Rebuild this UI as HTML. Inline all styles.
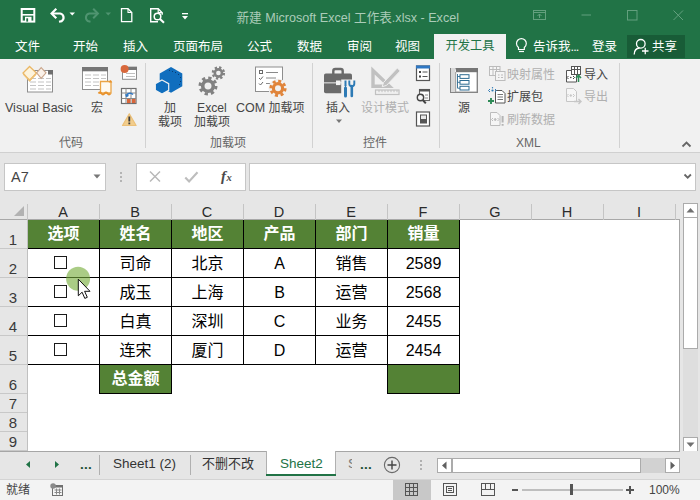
<!DOCTYPE html>
<html lang="zh-CN">
<head>
<meta charset="utf-8">
<title>新建 Microsoft Excel 工作表.xlsx - Excel</title>
<style>
*{box-sizing:border-box;margin:0;padding:0}
html,body{width:700px;height:500px;overflow:hidden;background:#e6e6e6}
body{font-family:"Liberation Sans","Noto Sans CJK SC",sans-serif;font-size:12px;color:#262626;position:relative}
.abs{position:absolute}
#app{position:absolute;left:0;top:0;width:700px;height:500px;overflow:hidden;background:#e6e6e6}
/* header */
#hdr{left:0;top:0;width:700px;height:59px;background:#217346}
#title{left:236.500px;top:8.500px;color:#abccb9;font-size:12.600px;white-space:nowrap;line-height:18px}
.tab{position:absolute;top:34.500px;height:25px;line-height:25px;color:#fff;font-size:12.500px;white-space:nowrap}
#tabact{left:434px;top:34px;width:72px;height:25px;background:#f1f1f1;color:#217346;text-align:center;line-height:24px;font-size:12.300px}
#share{left:627px;top:35px;width:58px;height:23px;background:#185c37}
/* ribbon */
#rib{left:0;top:59px;width:700px;height:94px;background:#f1f1f1;border-bottom:1px solid #d0d0d0}
.rl{position:absolute;font-size:12px;color:#454545;white-space:nowrap;line-height:16px}
.rl.dis{color:#b0b0b0}
.grp{position:absolute;top:135px;font-size:12px;color:#666;white-space:nowrap;line-height:16px;text-align:center}
.sep{position:absolute;top:63px;width:1px;height:85px;background:#d2d2d2}
/* formula */
#fbar{left:0;top:153px;width:700px;height:47px;background:#e6e6e6}
#nbox{left:4px;top:163px;width:102px;height:28px;background:#fff;border:1px solid #c6c6c6}
#fxbox{left:136px;top:163px;width:110px;height:28px;background:#fff;border:1px solid #c6c6c6}
#fbox{left:249px;top:163px;width:447px;height:28px;background:#fff;border:1px solid #c6c6c6}
/* grid */
#grid{left:0;top:200px;width:680px;height:251px;background:#fff}
#colh{left:0;top:200px;width:680px;height:20px;background:#e6e6e6;border-bottom:1px solid #a8a8a8}
#rowh{z-index:2;left:0;top:220px;width:28px;height:231px;background:#e6e6e6;border-right:1px solid #c0c0c0}
.ch{position:absolute;top:203px;height:18px;line-height:18px;font-size:14.5px;color:#2b2b2b;text-align:center;width:72px}
.cs{position:absolute;top:204px;width:1px;height:16px;background:#c4c4c4}
.rh{z-index:3;position:absolute;left:0;width:26px;text-align:center;font-size:15px;color:#3a3a3a;line-height:16px}
.rs{z-index:3;position:absolute;left:0;width:27px;height:1px;background:#c8c8c8}
.hc{position:absolute;top:220px;width:73px;height:29px;background:#548235;color:#fff;font-weight:bold;font-size:16px;text-align:center;line-height:27px;border:1px solid #000;border-top:0}
.hc.tot{height:30px;border-top:1px solid #000}
.c{position:absolute;width:73px;height:30px;border:1px solid #000;font-size:16px;color:#000;text-align:center;line-height:29px}
.cb{position:absolute;width:13px;height:13px;border:1.300px solid #1a1a1a;background:#fff}
/* sheet tabs */
#tabs{left:0;top:451px;width:700px;height:28px;background:#e6e6e6}
.st{position:absolute;top:454px;font-size:13.5px;color:#333;line-height:20px;white-space:nowrap}
.sb{background:#fff;border:1px solid #ababab}
#status{left:0;top:479px;width:700px;height:21px;background:#f3f3f3;border-top:1px solid #d4d4d4}
</style>
</head>
<body>
<div id="app">
<!-- HEADER -->
<div id="hdr" class="abs"></div>
<div id="title" class="abs">新建 Microsoft Excel 工作表.xlsx - Excel</div>
<div id="share" class="abs"></div>
<div id="tabact" class="abs">开发工具</div>
<div class="tab" style="left:15px">文件</div>
<div class="tab" style="left:73px">开始</div>
<div class="tab" style="left:123px">插入</div>
<div class="tab" style="left:173px">页面布局</div>
<div class="tab" style="left:247px">公式</div>
<div class="tab" style="left:297px">数据</div>
<div class="tab" style="left:347px">审阅</div>
<div class="tab" style="left:395px">视图</div>
<div class="tab" style="left:533px">告诉我<span style="letter-spacing:-.8px">...</span></div>
<div class="tab" style="left:592px">登录</div>
<div class="tab" style="left:652px">共享</div>
<svg class="abs" style="left:0;top:0" width="700" height="59" fill="none" stroke="#fff" stroke-width="1.500">
<!-- save -->
<rect x="21.700" y="9" width="12.600" height="12.600" stroke-width="2"/><path d="M21.700 14.800h12.600" stroke-width="1.600"/><rect x="25" y="16.800" width="6.500" height="4.800" fill="#fff" stroke="none"/><rect x="26.300" y="18.300" width="1.800" height="3.300" fill="#217346" stroke="none"/>
<!-- undo -->
<path d="M52 13.500h8.200a4.200 4.200 0 0 1 1.500 7.600l-2.700.6" stroke-width="2.200"/><path d="M56.300 8.800l-4.700 4.700 4.700 4.700" stroke-width="2.200"/>
<polygon points="69.500,12.500 75,12.500 72.250,15.500" fill="#fff" stroke="none"/>
<!-- redo -->
<g stroke="#4f9470" fill="none"><path d="M97.500 13.500h-8.200a4.200 4.200 0 0 0-1.500 7.600l2.700.6" stroke-width="2"/><path d="M93.200 8.800l4.700 4.700-4.700 4.700" stroke-width="2"/></g>
<polygon points="105.500,12.500 111,12.500 108.250,15.500" fill="#4f9470" stroke="none"/>
<!-- new -->
<path d="M121.500 8.700h6.500l3.800 3.800v9.200h-10.300z" stroke-width="1.300"/><path d="M128 8.700v3.800h3.800" stroke-width="1.100"/>
<!-- preview -->
<path d="M158 21.700h-7.300v-13h7.500l4 4v2" stroke-width="1.400"/><path d="M158.200 8.700v4h4" stroke-width="1.200"/><circle cx="157.500" cy="16.500" r="3.300" stroke-width="1.500"/><path d="M160 19l4 3.800" stroke-width="2"/>
<!-- customize -->
<rect x="182" y="13" width="6" height="1.300" fill="#fff" stroke="none"/><polygon points="182,16 188,16 185,19.500" fill="#fff" stroke="none"/>
<!-- window ctrls -->
<g stroke="#63a07e" stroke-width="1"><rect x="533.500" y="10.500" width="12" height="9"/><path d="M533.500 12.500h12M539.500 18v-4M537.500 16l2-2 2 2"/><path d="M581.500 15h9.500"/><rect x="627.500" y="10.500" width="9.500" height="9.500"/><path d="M673.500 10.500l9.500 9.500M683 10.500l-9.500 9.500"/></g>
<!-- bulb -->
<path d="M518.500 47.500c-1.500-1.300-2-2.600-2-4a4.900 4.900 0 0 1 9.800 0c0 1.400-.5 2.700-2 4v2h-5.800z" stroke-width="1.200"/><path d="M519 51.500h5" stroke-width="1.200"/>
<!-- person -->
<circle cx="640.800" cy="43.800" r="4.300" stroke-width="1.300"/><path d="M634.200 54.500c0-4 2.500-6.300 5.500-6.500" stroke-width="1.300"/><path d="M642 51h6.500M645.250 47.800v6.500" stroke-width="1.300"/>
</svg>
<!-- RIBBON -->
<!--RIB-START-->
<div id="rib" class="abs"></div>
<div class="sep" style="left:145px"></div>
<div class="sep" style="left:312px"></div>
<div class="sep" style="left:439px"></div>
<div class="sep" style="left:619px"></div>
<svg class="abs" style="left:0;top:0" width="700" height="154" fill="none">
<!-- Visual Basic -->
<g>
<rect x="27.500" y="70.500" width="25" height="21.500" fill="#fff" stroke="#8e8e8e"/>
<rect x="48" y="70" width="5" height="4.500" fill="#6e6e6e"/>
<g stroke="#c4c4c4" stroke-width="1.200"><path d="M30 78.500h6M38 78.500h6M46 78.500h5M30 82h6M38 82h6M46 82h5M30 85.500h6M38 85.500h6M46 85.500h5M30 89h6M38 89h6M46 89h5"/></g>
<polygon points="29.600,66.500 36.400,73 29.600,80.800 23,73" fill="#fdf3dc" stroke="#eab765" stroke-width="1.300"/>
<polygon points="23,73 29.600,79 36.400,73 36.400,74.800 29.600,81.500 23,74.800" fill="#eebf73"/>
<polygon points="41.200,67.600 46,72.800 41.200,78.400 36.600,72.800" fill="#fbf2ea" stroke="#c9a58b" stroke-width="1.100"/>
</g>
<!-- Macro -->
<g>
<rect x="82.500" y="67.500" width="25" height="22" fill="#fff" stroke="#8e8e8e"/>
<rect x="82" y="67" width="26" height="4.300" fill="#767676"/>
<g stroke="#c4c4c4" stroke-width="1.200"><path d="M85 75h6M93 75h6M101 75h5M85 78.500h6M93 78.500h6M101 78.500h5M85 82h6M93 82h6M85 85.500h6M93 85.500h6"/></g>
<path d="M100.500 81.500h10.500v11.500h-10.500z" fill="#fefaf2" stroke="#eba546" stroke-width="1.300"/>
<path d="M98.500 93.500q1.500-2 3 0t3 0 3 0 3 0" stroke="#e8912a" stroke-width="1.800"/>
<path d="M110.500 80l1.800 2.500h-3.600z" fill="#e8912a"/>
</g>
<!-- record macro -->
<g>
<rect x="122.500" y="67.300" width="14" height="12" fill="#fff" stroke="#8e8e8e"/>
<rect x="122" y="66.800" width="15" height="3.200" fill="#767676"/>
<path d="M126 73.500h9M126 76.500h9" stroke="#c0c0c0"/>
<circle cx="124.600" cy="68.900" r="4" fill="#d8683c"/>
</g>
<!-- relative refs -->
<g>
<rect x="121.500" y="88.500" width="14.500" height="15" fill="#fff" stroke="#6e6e6e" stroke-width="1.200"/>
<path d="M126 88.500v15M131 88.500v15M121.500 93h14.500M121.500 98.500h14.500" stroke="#8a8a8a"/>
<rect x="127" y="99" width="3.500" height="4" fill="#d9663a"/><rect x="132" y="99" width="3.500" height="4" fill="#d9663a"/>
<path d="M126.500 96.500c0-3 4-4.500 6.500-2" stroke="#2f78c4" stroke-width="1.600"/><path d="M125 94l1.300 3.300 3-1.500z" fill="#2f78c4"/>
</g>
<!-- warning -->
<g>
<path d="M129.300 113.800l6.800 11.700h-13.600z" fill="#f2cd8c" stroke="#ecc078" stroke-width="1.200" stroke-linejoin="round"/>
<rect x="128.400" y="116.500" width="1.800" height="5" fill="#3a3a3a"/><rect x="128.400" y="122.500" width="1.800" height="1.800" fill="#3a3a3a"/>
</g>
<!-- Add-ins hexagons -->
<g fill="#106ebe">
<polygon points="171,67 182.300,73.400 182.300,86.300 171,92.700 159.700,86.300 159.700,73.400"/>
<polygon points="162,80 168.700,83.700 168.700,90.300 162,94 155.300,90.300 155.300,83.700" stroke="#f1f1f1" stroke-width="1.200"/>
</g>
<g fill="#0a3d73"><rect x="169" y="70" width="1" height="1"/><rect x="172" y="71" width="1" height="1"/><rect x="175" y="72" width="1" height="1"/><rect x="178" y="74" width="1" height="1"/><rect x="180" y="77" width="1" height="1"/><rect x="180" y="81" width="1" height="1"/><rect x="179" y="84" width="1" height="1"/></g>
<!-- Excel add-ins gears -->
<g stroke="#828282">
<circle cx="208" cy="86" r="5.300" stroke-width="3.600"/>
<circle cx="208" cy="86" r="8" stroke-width="3" stroke-dasharray="3.300 2.980"/>
<circle cx="218.400" cy="73" r="3.600" stroke-width="2.600"/>
<circle cx="218.400" cy="73" r="5.600" stroke-width="2.200" stroke-dasharray="2.300 2.100"/>
</g>
<!-- COM add-ins -->
<g>
<rect x="255.500" y="67" width="27" height="24.500" fill="#fff" stroke="#8e8e8e"/>
<path d="M266 72.500h12M266 78h10M266 83.500h6" stroke="#8a8a8a"/>
<rect x="259.500" y="70.500" width="3" height="3" stroke="#6a6a6a"/>
<path d="M259 78l1.500 1.500 2.500-3M259 83.500l1.500 1.500 2.500-3" stroke="#6a6a6a"/>
<circle cx="278" cy="88.300" r="9.500" fill="#f1f1f1" stroke="none"/>
<circle cx="278" cy="88.300" r="4.600" stroke="#e0843a" stroke-width="3.200"/>
<circle cx="278" cy="88.300" r="7.200" stroke="#e0843a" stroke-width="2.800" stroke-dasharray="3 2.650"/>
</g>
<!-- Insert toolbox -->
<g>
<path d="M333.300 74v-3a2 2 0 0 1 2-2h5.400a2 2 0 0 1 2 2v3" stroke="#6b6b6b" stroke-width="2.400"/>
<rect x="324" y="73.500" width="28" height="19.800" rx="1.800" fill="#6b6b6b"/>
<rect x="324" y="82.300" width="28" height="1.100" fill="#e4e4e4"/>
<rect x="336" y="80.500" width="4.600" height="4.600" fill="#f4f4f4"/>
<path d="M341.200 79.500h14v18h-14z" fill="#f1f1f1"/>
<path d="M345.500 80.500v5.500" stroke="#2d7ab5" stroke-width="2"/><path d="M345.500 85v3.500" stroke="#2d7ab5" stroke-width="1.200"/><path d="M345.500 88v8" stroke="#2d7ab5" stroke-width="3" stroke-linecap="round"/>
<path d="M351.800 86v10" stroke="#2d7ab5" stroke-width="2.600" stroke-linecap="round"/><path d="M349.300 80.500v3.300a2.500 2.500 0 0 0 5 0v-3.300" stroke="#2d7ab5" stroke-width="1.900"/>
</g>
<polygon points="336,119.500 342,119.500 339,123" fill="#777"/>
<!-- Design mode (disabled) -->
<g stroke="#c1c1c1" fill="none">
<path d="M373 70.500v15.700h16.500z" stroke-width="3.400" stroke-linejoin="miter"/>
<path d="M383.500 82.500l13.800-14.500 3 2.900-13.800 14.500-4.300 1.300z" fill="#c1c1c1" stroke="#f1f1f1" stroke-width="1"/>
<rect x="375.500" y="90" width="23.500" height="4.500" stroke-width="1.200"/>
<path d="M379 90v2.200M382 90v2.200M385 90v2.200M388 90v2.200M391 90v2.200M394 90v2.200M397 90v2.200" stroke-width="1"/>
</g>
<!-- properties -->
<g>
<rect x="416.500" y="66" width="13" height="14.500" fill="#fff" stroke="#555" stroke-width="1.200"/>
<rect x="416" y="65.500" width="14" height="3" fill="#2f78c4"/>
<rect x="419" y="71" width="2" height="2" fill="#444"/><rect x="419" y="75.500" width="2" height="2" fill="#444"/>
<path d="M422.500 72h5M422.500 76.500h5" stroke="#555"/>
</g>
<!-- view code -->
<g>
<rect x="419.500" y="89.500" width="10" height="11" fill="#fff" stroke="#666" stroke-width="1.100"/>
<rect x="419" y="89" width="11" height="2.500" fill="#555"/>
<path d="M425 95h3M425 98h3" stroke="#888"/>
<circle cx="420.500" cy="97.500" r="3.200" fill="#f6f6f6" stroke="#444" stroke-width="1.400"/><path d="M422.800 100l3 3.300" stroke="#444" stroke-width="2"/>
</g>
<!-- run dialog -->
<g>
<rect x="416.500" y="112" width="13" height="14" fill="#fff" stroke="#555" stroke-width="1.200"/>
<rect x="420.500" y="115" width="6" height="8" fill="#e8e8e8" stroke="#555"/><rect x="420.500" y="119" width="6" height="4" fill="#555"/>
</g>
<!-- Source -->
<g>
<rect x="450.700" y="68.700" width="26.600" height="23.600" fill="#fff" stroke="#858585" stroke-width="1.400"/>
<rect x="456" y="68" width="22" height="4.200" fill="#767676"/>
<rect x="451" y="68" width="4.500" height="24" fill="#d8d8d8"/>
<path d="M455.700 72v20" stroke="#9a9a9a"/>
<path d="M457.500 74v14.200M457.500 76.500h2.500M457.500 82.300h2.500M457.500 88.200h2.500" stroke="#2d6b91" stroke-width=".9"/>
<rect x="460" y="74.700" width="9" height="3.700" fill="#fff" stroke="#2d6b91"/><rect x="460" y="80.500" width="9" height="3.700" fill="#fff" stroke="#2d6b91"/><rect x="460" y="86.300" width="9" height="3.700" fill="#fff" stroke="#2d6b91"/>
</g>
<!-- map properties (disabled) -->
<g stroke="#bcbcbc">
<rect x="489.500" y="66.500" width="10.500" height="9" fill="#f6f6f6"/><path d="M489.500 69.500h10.500M493 66.500v9M496.500 66.500v9"/>
<rect x="495.500" y="71.500" width="9.500" height="9" fill="#f4f4f4"/><path d="M498 75h1.500M501 75h2M498 77.500h1.500M501 77.500h2"/>
</g>
<!-- expansion packs -->
<g>
<path d="M495.500 90.500h6.500l3 3v9.500h-9.500z" fill="#fff" stroke="#555"/>
<path d="M497.500 94.500h5.500M497.500 97h5.500M497.500 99.500h5.500" stroke="#777"/>
<path d="M490 89l-1.500 1.500 1.500 1.500M495 89l1.500 1.500-1.500 1.500" stroke="#2d7ab5" stroke-width="1"/><circle cx="492.500" cy="90.500" r="1.100" fill="#2d7ab5"/><circle cx="492.500" cy="87.800" r=".7" fill="#2d7ab5"/>
<path d="M488 101h6M491 98v6" stroke="#2e8b57" stroke-width="1.900"/>
</g>
<!-- refresh data (disabled) -->
<g stroke="#bcbcbc">
<path d="M490.500 112.500h6.500l3 3v10h-9.500z" fill="#f6f6f6"/>
<path d="M493 118l-1.500 1.500 1.500 1.500M497.500 118l1.500 1.500-1.500 1.500"/><circle cx="495.200" cy="119.500" r=".9" fill="#bcbcbc"/>
<path d="M502.600 116v6.500M502.600 124v1.700" stroke-width="2" stroke="#b4b4b4"/>
</g>
<!-- import -->
<g>
<path d="M566.500 70.500h7l3 3v8.500h-10z" fill="#fff" stroke="#555"/>
<path d="M568.500 76l-1.500 1.500 1.500 1.500M573 76l1.500 1.500-1.500 1.500" stroke="#444"/><circle cx="570.800" cy="77.500" r=".8" fill="#444"/>
<rect x="571.500" y="66.500" width="9" height="8" fill="#fff" stroke="#555"/><path d="M571.500 69.500h9M574.500 66.500v8M577.500 66.500v8" stroke="#555"/>
<path d="M578.500 82v-6M576 78l2.500-2.800 2.500 2.800" stroke="#2e8b57" stroke-width="1.500"/>
</g>
<!-- export (disabled) -->
<g stroke="#c6c6c6">
<path d="M566.500 88.500h7l3 3v10h-10z" fill="#f6f6f6"/>
<path d="M568.500 94l-1.500 1.500 1.500 1.500M573 94l1.500 1.500-1.500 1.500"/><circle cx="570.800" cy="95.500" r=".8" fill="#c6c6c6"/>
<path d="M574 101.500h7M578.500 99l2.500 2.500-2.500 2.500" stroke-width="1.400"/>
</g>
<!-- collapse chevron -->
<path d="M682.500 146.500l4-4 4 4" stroke="#666" stroke-width="1.800"/>
</svg>
<div class="rl" style="left:5px;top:99.500px;font-size:12.500px">Visual Basic</div>
<div class="rl" style="left:91px;top:99.500px">宏</div>
<div class="rl" style="left:164px;top:99.500px">加</div>
<div class="rl" style="left:158px;top:114px">载项</div>
<div class="rl" style="left:197px;top:99.500px;font-size:12.200px">Excel</div>
<div class="rl" style="left:194px;top:114px">加载项</div>
<div class="rl" style="left:236px;top:99.500px"><span style="font-size:12.500px">COM</span> 加载项</div>
<div class="rl" style="left:326px;top:99.500px">插入</div>
<div class="rl dis" style="left:361px;top:99.500px">设计模式</div>
<div class="rl" style="left:458px;top:99.500px">源</div>
<div class="rl dis" style="left:507px;top:66.800px">映射属性</div>
<div class="rl" style="left:507px;top:89.300px">扩展包</div>
<div class="rl dis" style="left:507px;top:111.800px">刷新数据</div>
<div class="rl" style="left:584px;top:66.800px">导入</div>
<div class="rl dis" style="left:584px;top:89.300px">导出</div>
<div class="grp" style="left:59px">代码</div>
<div class="grp" style="left:210px">加载项</div>
<div class="grp" style="left:363px">控件</div>
<div class="grp" style="left:516px">XML</div>
<!--RIB-END-->
<!-- FORMULA BAR -->
<div id="fbar" class="abs"></div>
<div id="nbox" class="abs"></div>
<div id="fxbox" class="abs"></div>
<div id="fbox" class="abs"></div>
<div class="abs" style="left:11px;top:168px;font-size:14.5px;line-height:18px;color:#444">A7</div>
<svg class="abs" style="left:0;top:154px" width="700" height="46">
<polygon points="93.500,20.500 100.500,20.500 97,24.500" fill="#777"/>
<rect x="120" y="18" width="2" height="2" fill="#b4b4b4"/><rect x="120" y="22" width="2" height="2" fill="#b4b4b4"/><rect x="120" y="26" width="2" height="2" fill="#b4b4b4"/>
<path d="M150 17.500l10 10M160 17.500l-10 10" stroke="#b8b8b8" stroke-width="1.5" fill="none"/>
<path d="M185.300 23.500l3.800 4 8.400-9.200" stroke="#bdbdbd" stroke-width="2.100" fill="none"/>
<path d="M684.500 20.500l3.200 3.200 3.200-3.200" stroke="#666" stroke-width="1.800" fill="none"/>
<text x="221" y="27" font-family="'Liberation Serif','DejaVu Serif',serif" font-style="italic" font-weight="bold" font-size="15" fill="#4a4a4a">f<tspan font-size="10.500" dx=".5" dy="0">x</tspan></text>
</svg>
<!-- GRID -->
<!--GRID-START-->
<div id="grid" class="abs"></div>
<div id="colh" class="abs"></div>
<div id="rowh" class="abs"></div>
<div class="ch" style="left:27px">A</div>
<div class="cs" style="left:99px"></div>
<div class="ch" style="left:99px">B</div>
<div class="cs" style="left:171px"></div>
<div class="ch" style="left:171px">C</div>
<div class="cs" style="left:243px"></div>
<div class="ch" style="left:243px">D</div>
<div class="cs" style="left:315px"></div>
<div class="ch" style="left:315px">E</div>
<div class="cs" style="left:387px"></div>
<div class="ch" style="left:387px">F</div>
<div class="cs" style="left:459px"></div>
<div class="ch" style="left:459px">G</div>
<div class="cs" style="left:531px"></div>
<div class="ch" style="left:531px">H</div>
<div class="cs" style="left:603px"></div>
<div class="ch" style="left:603px">I</div>
<div class="cs" style="left:675px"></div>
<div class="cs" style="left:27px"></div>
<div class="rh" style="top:232px">1</div>
<div class="rs" style="top:248px"></div>
<div class="rh" style="top:261px">2</div>
<div class="rs" style="top:277px"></div>
<div class="rh" style="top:290px">3</div>
<div class="rs" style="top:306px"></div>
<div class="rh" style="top:319px">4</div>
<div class="rs" style="top:335px"></div>
<div class="rh" style="top:348px">5</div>
<div class="rs" style="top:364px"></div>
<div class="rh" style="top:377px">6</div>
<div class="rs" style="top:393px"></div>
<div class="rh" style="top:396px">7</div>
<div class="rs" style="top:412px"></div>
<div class="rh" style="top:415px">8</div>
<div class="rs" style="top:431px"></div>
<div class="rh" style="top:434px">9</div>
<div class="rs" style="top:450px"></div>
<div class="hc" style="left:27px">选项</div>
<div class="hc" style="left:99px">姓名</div>
<div class="hc" style="left:171px">地区</div>
<div class="hc" style="left:243px">产品</div>
<div class="hc" style="left:315px">部门</div>
<div class="hc" style="left:387px">销量</div>
<div class="c" style="left:27px;top:248px"></div>
<div class="c" style="left:99px;top:248px">司命</div>
<div class="c" style="left:171px;top:248px">北京</div>
<div class="c" style="left:243px;top:248px">A</div>
<div class="c" style="left:315px;top:248px">销售</div>
<div class="c" style="left:387px;top:248px">2589</div>
<div class="cb" style="left:54px;top:256px"></div>
<div class="c" style="left:27px;top:277px"></div>
<div class="c" style="left:99px;top:277px">成玉</div>
<div class="c" style="left:171px;top:277px">上海</div>
<div class="c" style="left:243px;top:277px">B</div>
<div class="c" style="left:315px;top:277px">运营</div>
<div class="c" style="left:387px;top:277px">2568</div>
<div class="cb" style="left:54px;top:285px"></div>
<div class="c" style="left:27px;top:306px"></div>
<div class="c" style="left:99px;top:306px">白真</div>
<div class="c" style="left:171px;top:306px">深圳</div>
<div class="c" style="left:243px;top:306px">C</div>
<div class="c" style="left:315px;top:306px">业务</div>
<div class="c" style="left:387px;top:306px">2455</div>
<div class="cb" style="left:54px;top:314px"></div>
<div class="c" style="left:27px;top:335px"></div>
<div class="c" style="left:99px;top:335px">连宋</div>
<div class="c" style="left:171px;top:335px">厦门</div>
<div class="c" style="left:243px;top:335px">D</div>
<div class="c" style="left:315px;top:335px">运营</div>
<div class="c" style="left:387px;top:335px">2454</div>
<div class="cb" style="left:54px;top:343px"></div>
<div class="hc tot" style="left:99px;top:364px">总金额</div>
<div class="hc tot" style="left:387px;top:364px"></div>
<!--GRID-END-->
<!-- CURSOR -->
<svg class="abs" style="left:60px;top:260px;z-index:5" width="40" height="44">
<circle cx="18.100" cy="18.800" r="12" fill="rgba(118,172,58,0.62)"/>
<path d="M18.300 19.200v16.600l3.800-3.600 2.700 6.200 2.500-1.100-2.700-6h5.400z" fill="#fff" stroke="#111" stroke-width="1" stroke-linejoin="miter"/>
</svg>
<!-- SCROLL V -->
<svg class="abs" style="left:0;top:200px" width="28" height="20"><polygon points="24,6 24,16 14,16" fill="#b2b2b2"/></svg>
<div class="abs" style="left:679px;top:220px;width:1px;height:231px;background:#a6a6a6"></div>
<div class="abs" style="left:680px;top:200px;width:20px;height:251px;background:#e6e6e6"></div>
<div class="abs" style="left:683px;top:349px;width:15px;height:88px;background:#dedede"></div>
<div class="abs sb" style="left:683px;top:203px;width:15px;height:15px"></div>
<div class="abs sb" style="left:683px;top:217px;width:15px;height:132px"></div>
<div class="abs sb" style="left:683px;top:437px;width:15px;height:15px"></div>
<svg class="abs" style="left:683px;top:203px" width="15" height="15"><polygon points="3.5,9.5 11.5,9.5 7.5,5" fill="#707070"/></svg>
<svg class="abs" style="left:683px;top:437px" width="15" height="15"><polygon points="3.5,5.5 11.5,5.5 7.5,10" fill="#707070"/></svg>
<!-- TABS -->
<div id="tabs" class="abs"></div>
<div class="abs" style="left:0;top:451px;width:680px;height:1px;background:#a6a6a6"></div>
<svg class="abs" style="left:0;top:451px" width="440" height="28">
<polygon points="26,13.5 30,10 30,17" fill="#217346"/>
<polygon points="59,13.5 55,10 55,17" fill="#217346"/>
<rect x="99" y="4" width="1" height="20" fill="#b0b0b0"/>
<rect x="190" y="4" width="1" height="20" fill="#b0b0b0"/>
<rect x="266" y="0" width="70" height="25" fill="#fff"/>
<rect x="266" y="0" width="1" height="24" fill="#b0b0b0"/>
<rect x="335" y="0" width="1" height="24" fill="#b0b0b0"/>
<rect x="266" y="23" width="70" height="2" fill="#217346"/>
<circle cx="392" cy="14" r="7.6" fill="none" stroke="#6a6a6a" stroke-width="1.1"/>
<path d="M387.5 14h9M392 9.5v9" stroke="#444" stroke-width="1.4" fill="none"/>
<rect x="420" y="9" width="2" height="2" fill="#b0b0b0"/><rect x="420" y="13" width="2" height="2" fill="#b0b0b0"/><rect x="420" y="17" width="2" height="2" fill="#b0b0b0"/>
</svg>
<div class="st" style="left:80px;top:455px;font-weight:bold;color:#1e4e32;letter-spacing:.2px">...</div>
<div class="st" style="left:113px">Sheet1 (2)</div>
<div class="st" style="left:202px;font-size:13px">不删不改</div>
<div class="st" style="left:280px;color:#217346">Sheet2</div>
<div class="st" style="left:348px;width:3.500px;overflow:hidden;color:#777">S</div>
<div class="st" style="left:360px;top:455px;font-weight:bold;color:#1e4e32;letter-spacing:.2px">...</div>
<!-- SCROLL H -->
<div class="abs" style="left:437px;top:458px;width:243px;height:15px;background:#d2d2d2"></div>
<div class="abs sb" style="left:437px;top:458px;width:15px;height:15px"></div>
<div class="abs sb" style="left:452px;top:458px;width:189px;height:15px"></div>
<div class="abs sb" style="left:665px;top:458px;width:15px;height:15px"></div>
<svg class="abs" style="left:437px;top:458px" width="15" height="15"><polygon points="5,7.5 9.5,3.5 9.5,11.5" fill="#606060"/></svg>
<svg class="abs" style="left:665px;top:458px" width="15" height="15"><polygon points="10,7.5 5.5,3.5 5.5,11.5" fill="#606060"/></svg>
<!-- STATUS -->
<div id="status" class="abs"></div>
<div class="abs" style="left:393px;top:480px;width:38px;height:20px;background:#c8c8c8"></div>
<div class="abs" style="left:6px;top:482px;font-size:12px;color:#444;line-height:16px">就绪</div>
<svg class="abs" style="left:0;top:479px" width="700" height="21">
<g fill="none" stroke="#555" stroke-width="1">
<rect x="405.5" y="4.5" width="12" height="12"/><path d="M409.5 4.5v12M413.5 4.5v12M405.5 8.5h12M405.5 12.5h12"/>
<rect x="443.5" y="4.5" width="13" height="12"/><rect x="446.5" y="7.5" width="7" height="6"/><path d="M448 9.5h4M448 11.5h4"/>
<rect x="481.5" y="4.5" width="13" height="12"/><path d="M485.5 4.5v6h5v-6M481.5 10.500h13"/>
</g>
<rect x="512" y="10" width="6" height="2" fill="#555"/>
<rect x="522" y="10.500" width="101" height="1" fill="#8a8a8a"/>
<rect x="570" y="5" width="3" height="11" fill="#555"/>
<path d="M626 11h8M630 7v8" stroke="#555" stroke-width="2" fill="none"/>
<g><rect x="52.500" y="6.500" width="10" height="10" fill="#f6f6f6" stroke="#707070"/><rect x="52" y="6" width="11" height="2.500" fill="#707070"/><path d="M54.500 11h7M54.500 13.500h7M56.500 9.500v6M59.500 9.500v6" stroke="#8a8a8a" fill="none"/><circle cx="53.100" cy="7" r="2.800" fill="#8a8a8a"/></g>
</svg>
<div class="abs" style="left:649px;top:482px;font-size:12px;color:#444;line-height:16px">100%</div>
</div>
</body>
</html>
